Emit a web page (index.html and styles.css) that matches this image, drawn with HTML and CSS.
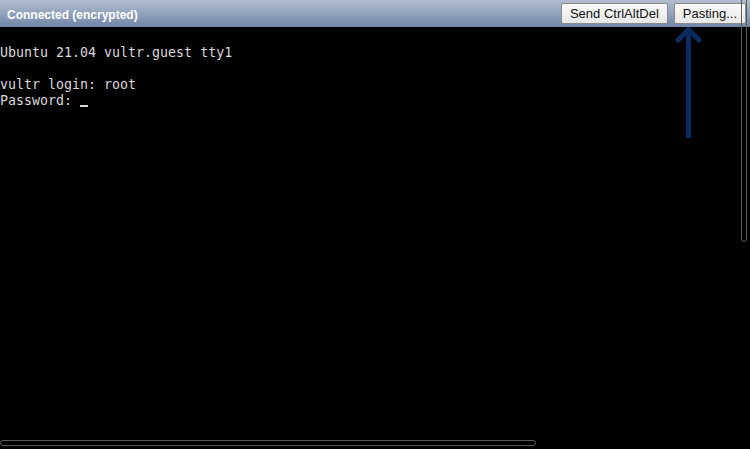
FILE: index.html
```html
<!DOCTYPE html>
<html lang="en">
<head>
  <meta charset="UTF-8">
  <meta name="viewport" content="width=device-width, initial-scale=1">
  <title>noVNC</title>
  <link rel="stylesheet" href="styles.css">
</head>
<body>

  <div class="status-bar">
    <div class="status">Connected (encrypted)</div>
    <div class="actions">
      <button class="btn">Send CtrlAltDel</button>
      <button class="btn">Pasting...</button>
    </div>
  </div>

  <div class="screen">
    <div class="line"></div>
    <div class="line">Ubuntu 21.04 vultr.guest tty1</div>
    <div class="line"></div>
    <div class="line">vultr login: root</div>
    <div class="line">Password: <span class="cursor"></span></div>
  </div>

  <!-- hint arrow pointing at the paste button -->
  <svg class="arrow" width="27" height="114" viewBox="0 0 27 114">
    <path d="M13.5 5 L13.5 112" stroke="#0b2b5e" stroke-width="5" fill="none"/>
    <path d="M3 14 L13.5 3.5 L24 14" stroke="#0b2b5e" stroke-width="5" fill="none" stroke-linecap="round" stroke-linejoin="round"/>
  </svg>

  <div class="vscroll"></div>
  <div class="hscroll"></div>

</body>
</html>
```

FILE: styles.css
```css
html, body {
  margin: 0;
  height: 100%;
  background-color: #000;
  overflow: hidden;
}

.status-bar {
  height: 27px;
  display: flex;
  justify-content: space-between;
  align-items: center;
  padding: 0 4px 0 7px;
  background: linear-gradient(#b2bed0, #6f86a6);
  font-family: 'Liberation Sans', Arial, sans-serif;
}

.status {
  color: #fff;
  font-weight: bold;
  font-size: 12px;
  padding-top: 2px;
}

.actions {
  display: flex;
  gap: 6px;
}

.btn {
  font-family: 'Liberation Sans', Arial, sans-serif;
  font-size: 13px;
  height: 21px;
  padding: 0 8px;
  background: linear-gradient(#fafafa, #e8e8e8);
  color: #111;
  border: 1px solid #8a8a8a;
  border-radius: 2px;
}

.screen {
  padding-top: 2px;
  color: #d8d8d8;
  font-family: 'DejaVu Sans Mono', monospace;
  font-size: 13.3px;
  line-height: 16px;
}

.line {
  height: 16px;
  white-space: pre;
}

.cursor {
  display: inline-block;
  width: 8px;
  height: 2px;
  background-color: #d8d8d8;
  vertical-align: -2px;
}

.arrow {
  position: absolute;
  left: 675px;
  top: 26px;
}

.vscroll {
  position: absolute;
  left: 741px;
  top: -4px;
  width: 4px;
  height: 244px;
  border: 1px solid #5a5a5a;
  border-radius: 3px;
}

.hscroll {
  position: absolute;
  left: 0;
  top: 440px;
  width: 534px;
  height: 4px;
  border: 1px solid #5a5a5a;
  border-radius: 3px;
}
```
